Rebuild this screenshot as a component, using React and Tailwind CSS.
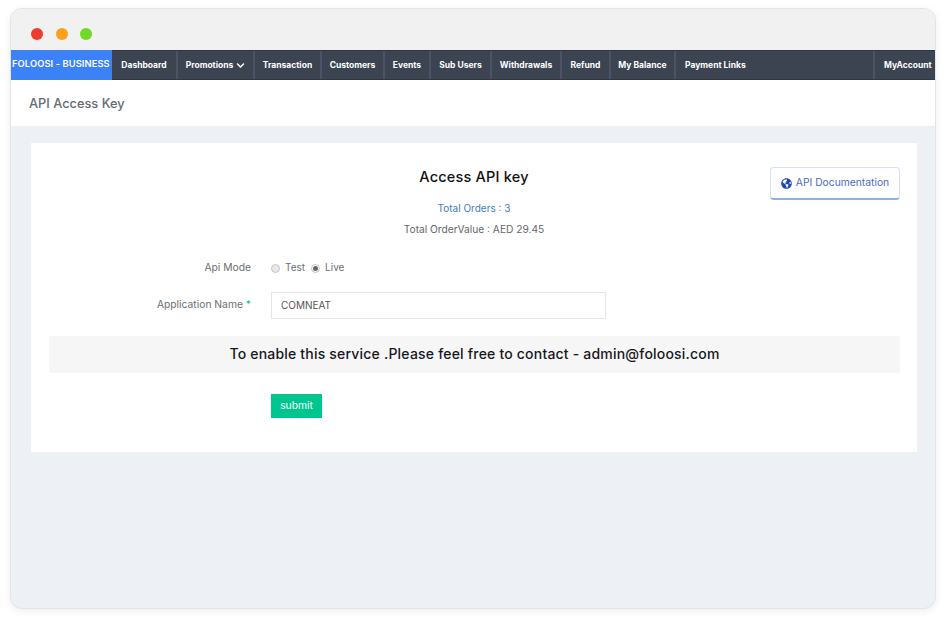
import { FaChevronDown, FaGlobeAmericas } from "react-icons/fa";

const NAV = [
  { label: "Dashboard", w: "w-[66px]" },
  { label: "Promotions", w: "w-[77px]", caret: true },
  { label: "Transaction", w: "w-[67px]" },
  { label: "Customers", w: "w-[63px]" },
  { label: "Events", w: "w-[46px]" },
  { label: "Sub Users", w: "w-[61px]" },
  { label: "Withdrawals", w: "w-[70px]" },
  { label: "Refund", w: "w-[49px]" },
  { label: "My Balance", w: "w-[65px]" },
];

export default function App() {
  return (
    <div className="w-[950px] h-[626px] bg-white pt-[8px] pl-[10px] font-['Inter','Liberation_Sans',sans-serif] overflow-hidden">
      {/* Browser window */}
      <div className="w-[926px] h-[601px] rounded-[12px] border border-[#e4e4e4] bg-[#edf1f5] overflow-hidden shadow-[0_2px_8px_rgba(0,0,0,0.07)] flex flex-col">
        <div className="h-[41px] shrink-0 bg-[#f1f1f1] flex items-center gap-[12.5px] pl-[20px] pt-[8px]">
          <span className="w-[12px] h-[12px] rounded-full bg-[#ee3b2b]" />
          <span className="w-[12px] h-[12px] rounded-full bg-[#fda11c]" />
          <span className="w-[12px] h-[12px] rounded-full bg-[#6fd923]" />
        </div>

        {/* Nav */}
        <div className="h-[30px] shrink-0 flex bg-[#3c4452] border-y border-[#2f3541] text-white text-[8.5px] font-bold">
          <div className="w-[101px] -my-px pl-px bg-[#3b82f6] flex items-center pb-[3px] text-[9.3px] tracking-[0.1px] font-semibold whitespace-nowrap">
            FOLOOSI - BUSINESS
          </div>
          {NAV.map((n) => (
            <div key={n.label} className={`${n.w} pt-px border-r-2 border-[#4b5364] flex items-center justify-center gap-[3px] whitespace-nowrap`}>
              {n.label}
              {n.caret && <FaChevronDown className="w-[9px] h-[9px]" />}
            </div>
          ))}
          <div className="flex-1 pt-px flex items-center pl-[9px] border-r-2 border-[#4b5364]">Payment Links</div>
          <div className="w-[60px] pt-px flex items-center pl-[9px]">MyAccount</div>
        </div>

        <div className="h-[46px] shrink-0 bg-white flex items-center pl-[18px] pt-[2px] text-[12.8px] font-medium text-[#666a70]">
          API Access Key
        </div>

        {/* Card */}
        <div className="mt-[17px] ml-[20px] w-[886px] h-[309px] bg-white relative flex flex-col">
          <a className="absolute right-[17px] top-[24px] w-[130px] h-[33px] rounded-[4px] border border-[#d5e0f2] border-b-[2px] border-b-[#8db0e6] flex items-center justify-center gap-[4px] text-[10.3px] text-[#4a6cc0]">
            <FaGlobeAmericas className="w-[11px] h-[11px] text-[#1f47b0]" />
            API Documentation
          </a>

          <div className="pt-[25px] text-center text-[14.5px] tracking-[0.2px] font-medium leading-[18px] text-[#111]">Access API key</div>
          <div className="mt-[15px] text-center text-[10px] leading-[14px] text-[#3f7cc0]">Total Orders : 3</div>
          <div className="mt-[7px] text-center text-[10.2px] leading-[14px] text-[#62666b]">Total OrderValue : AED 29.45</div>

          <div className="mt-[24px] flex items-center h-[16px] text-[10.3px] text-[#6b6f74]">
            <div className="w-[220px] text-right">Api Mode</div>
            <div className="ml-[20px] flex items-center text-[10px]">
              <span className="w-[9px] h-[9px] rounded-full border border-[#c4c4c4] bg-[#e9e9e9]" />
              <span className="ml-[5px] -mt-px">Test</span>
              <span className="ml-[6px] w-[9px] h-[9px] rounded-full border border-[#c4c4c4] bg-white flex items-center justify-center">
                <span className="w-[5px] h-[5px] rounded-full bg-[#666]" />
              </span>
              <span className="ml-[5px] -mt-px">Live</span>
            </div>
          </div>

          <div className="mt-[16px] flex items-start text-[10.3px] text-[#6b6f74]">
            <div className="w-[220px] text-right pt-[5px] leading-[14px]">
              Application Name <span className="text-[#20c997]">*</span>
            </div>
            <div className="ml-[20px] w-[335px] h-[27px] border border-[#e6e6e6] flex items-center pl-[9px] text-[10px] text-[#555]">
              COMNEAT
            </div>
          </div>

          <div className="mt-[17px] mx-[18px] w-[851px] h-[37px] bg-[#f6f6f7] rounded-[2px] flex items-center justify-center pb-[3px] text-[14px] tracking-[0.2px] font-medium text-[#16181c]">
            To enable this service .Please feel free to contact - admin@foloosi.com
          </div>

          <button className="mt-[21px] ml-[240px] w-[51px] h-[24px] pb-px bg-[#00c58e] text-white text-[10.3px]">submit</button>
        </div>
      </div>
    </div>
  );
}
